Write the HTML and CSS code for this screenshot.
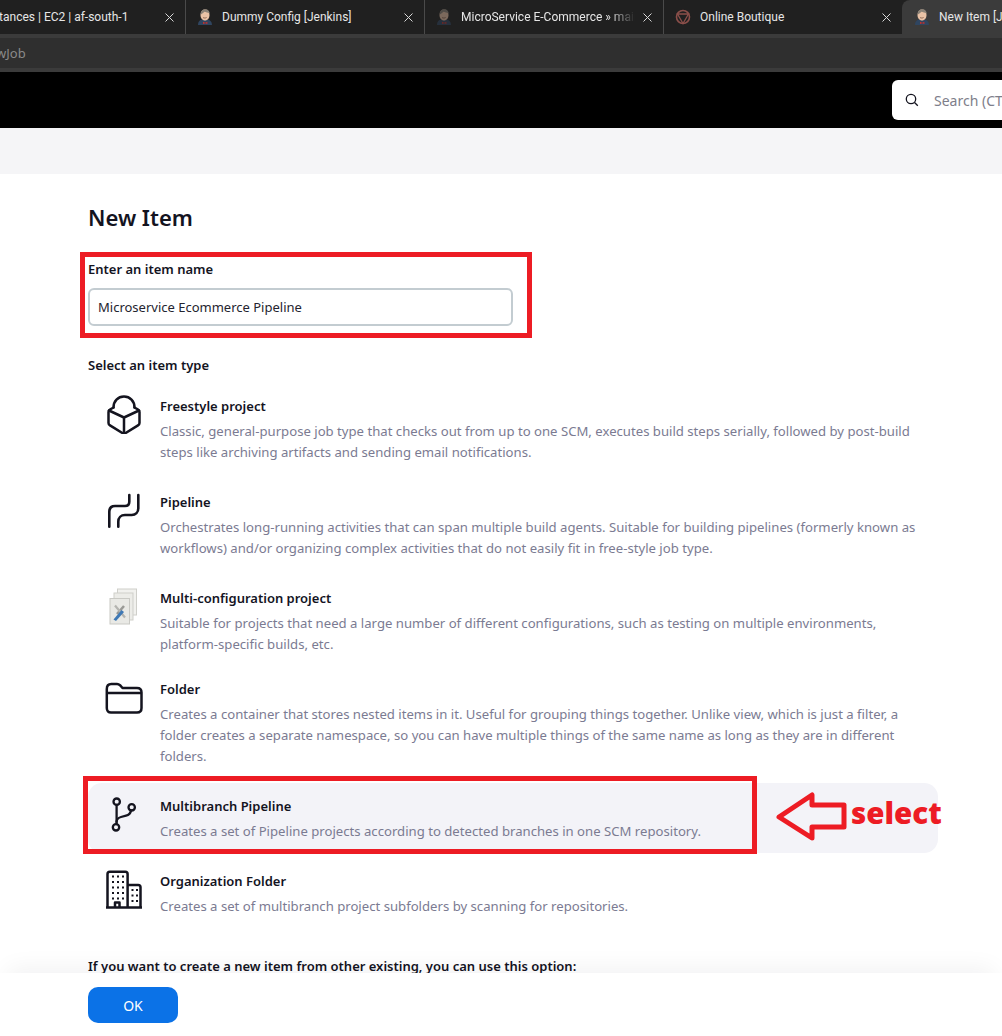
FILE: index.html
```html
<!DOCTYPE html>
<html lang="en">
<head>
<meta charset="utf-8">
<title>New Item [Jenkins]</title>
<link rel="stylesheet" href="styles.css">
</head>
<body>
<svg class="defs" width="0" height="0" aria-hidden="true">
  <symbol id="jenkins" viewBox="0 0 16 16">
    <path d="M1 16c0-3.500 1.500-5 4-5.500h5.500c2.500.5 4.500 2 4.500 5.500z" fill="#2f4560"/>
    <path d="M3.500 6c0-3.500 1.800-5.500 4.500-5.500S12.500 2.500 12.500 6c0 3-1.800 5.500-4.500 5.500S3.500 9 3.500 6z" fill="#e9c2a6"/>
    <path d="M3.700 5.500C3.500 2 6 .1 8.500.2c2.500.1 4 1.800 4.200 4.300C10.800 3.500 8.800 3.200 7.500 2.800 6.500 3.800 5 5 3.700 5.500z" fill="#8b8378"/>
    <path d="M6 12.800l2.200.9 2.200-.9v2.200l-2.200-.8-2.200.8z" fill="#c7302c"/>
    <path d="M6 8.500c1 .7 2.500.7 3.600 0" fill="none" stroke="#77523f" stroke-width=".8"/>
  </symbol>
  <symbol id="boutique" viewBox="0 0 16 16">
    <circle cx="8" cy="8" r="6.500" fill="none" stroke="#8b4f4a" stroke-width="1.600"/>
    <path d="M2.500 5h11L8 14.500z" fill="none" stroke="#8b4f4a" stroke-width="1.300"/>
  </symbol>
  <symbol id="close" viewBox="0 0 9 9">
    <path d="M.5.500l8 8M8.500.500l-8 8" stroke="currentColor" stroke-width="1" fill="none"/>
  </symbol>
</svg>

<div class="tabstrip">
  <div class="tab tab-first">
    <span class="tab-title">Instances | EC2 | af-south-1</span>
    <svg class="tab-close"><use href="#close"/></svg>
  </div>
  <div class="tab">
    <svg class="tab-icon"><use href="#jenkins"/></svg>
    <span class="tab-title">Dummy Config [Jenkins]</span>
    <svg class="tab-close"><use href="#close"/></svg>
  </div>
  <div class="tab">
    <svg class="tab-icon tab-icon-dim"><use href="#jenkins"/></svg>
    <span class="tab-title tab-title-fade">MicroService E-Commerce » main</span>
    <svg class="tab-close"><use href="#close"/></svg>
  </div>
  <div class="tab">
    <svg class="tab-icon"><use href="#boutique"/></svg>
    <span class="tab-title">Online Boutique</span>
    <svg class="tab-close"><use href="#close"/></svg>
  </div>
  <div class="tab tab-active">
    <svg class="tab-icon"><use href="#jenkins"/></svg>
    <span class="tab-title">New Item [Jenkins]</span>
  </div>
</div>
<div class="addressbar"><span class="address-text">view/all/newJob</span></div>

<header class="topbar">
  <div class="search">
    <svg class="search-icon" viewBox="0 0 16 16"><circle cx="7" cy="7" r="4.700" fill="none" stroke="#14141f" stroke-width="1.300"/><path d="M10.500 10.500l3.300 3.300" stroke="#14141f" stroke-width="1.300" fill="none"/></svg>
    <span class="search-text">Search (CTRL+K)</span>
  </div>
</header>
<div class="breadcrumbs"></div>

<main class="content">
  <h1 class="page-title">New Item</h1>
  <label class="field-label">Enter an item name</label>
  <input class="name-input" type="text" value="Microservice Ecommerce Pipeline">
  <h2 class="field-label type-label">Select an item type</h2>

  <ul class="types">
    <li class="type">
      <svg class="type-icon" viewBox="0 0 40 40" fill="none" stroke="#14141f" stroke-width="2.500" stroke-linejoin="round" stroke-linecap="round">
        <path d="M9.500 13.500C9.500 7 14 2.500 20 2.500S30.500 7 30.500 13.500"/>
        <path d="M9.500 13.500L6 15.500c-1 .6-1.500 1.300-1.500 2.500v11c0 1 .5 1.800 1.500 2.400l14 8.600 14-8.600c1-.6 1.500-1.400 1.500-2.400V18c0-1.200-.5-1.900-1.500-2.500l-3.500-2"/>
        <path d="M5 16.500l15 7 15-7M20 23.500V39"/>
      </svg>
      <div class="type-body">
        <div class="type-name">Freestyle project</div>
        <div class="type-desc">Classic, general-purpose job type that checks out from up to one SCM, executes build steps serially, followed by post-build steps like archiving artifacts and sending email notifications.</div>
      </div>
    </li>
    <li class="type">
      <svg class="type-icon" viewBox="0 0 40 40" fill="none" stroke="#14141f" stroke-width="2.600" stroke-linecap="round">
        <path d="M34.300 5v13.300c0 4-2.700 6.700-6.600 6.700H21c-4 0-6.700 2.700-6.700 6.700v5"/>
        <path d="M25.300 5v6.700c0 2.700-1.600 4.300-4.300 4.300H11c-3.500 0-5.700 2.200-5.700 5.700v15"/>
      </svg>
      <div class="type-body">
        <div class="type-name">Pipeline</div>
        <div class="type-desc">Orchestrates long-running activities that can span multiple build agents. Suitable for building pipelines (formerly known as workflows) and/or organizing complex activities that do not easily fit in free-style job type.</div>
      </div>
    </li>
    <li class="type type-tight">
      <svg class="type-icon" viewBox="0 0 40 40">
        <rect x="13.500" y="3" width="19" height="26" fill="#f1f1ee" stroke="#cfcfca"/>
        <rect x="10" y="7" width="19" height="27" fill="#ecece8" stroke="#cfcfca"/>
        <rect x="6" y="12.500" width="19.500" height="25.500" fill="#e9e9e5" stroke="#c9c9c4"/>
        <path d="M20 20l-7 8" stroke="#9a9a96" stroke-width="2.500" fill="none"/>
        <path d="M11 19.500l10 12" stroke="#b4b4b0" stroke-width="2.200" fill="none"/>
        <path d="M9.500 33.500l8-9.500 2.500 2-8 9z" fill="#3f79b5"/>
      </svg>
      <div class="type-body">
        <div class="type-name">Multi-configuration project</div>
        <div class="type-desc">Suitable for projects that need a large number of different configurations, such as testing on multiple environments, platform-specific builds, etc.</div>
      </div>
    </li>
    <li class="type">
      <svg class="type-icon" viewBox="0 0 40 40" fill="none" stroke="#14141f" stroke-width="2.500" stroke-linejoin="round">
        <path d="M2.800 12c0-3.200 1.800-5 4.500-5H13c1.300 0 2 .3 3 1.200L18.500 11H33c2.800 0 4.500 1.700 4.500 4.500V31c0 2.800-1.700 4.500-4.500 4.500H7c-2.700 0-4.200-1.700-4.200-4.500z"/>
        <path d="M2.800 16h34.700"/>
      </svg>
      <div class="type-body">
        <div class="type-name">Folder</div>
        <div class="type-desc">Creates a container that stores nested items in it. Useful for grouping things together. Unlike view, which is just a filter, a folder creates a separate namespace, so you can have multiple things of the same name as long as they are in different folders.</div>
      </div>
    </li>
    <li class="type type-hover">
      <svg class="type-icon" viewBox="0 0 40 40" fill="none" stroke="#14141f" stroke-width="2.300" stroke-linecap="round">
        <circle cx="12.700" cy="7.700" r="3.200"/>
        <circle cx="27.700" cy="13.300" r="3.200"/>
        <circle cx="12" cy="33.300" r="3.200"/>
        <path d="M12.600 11v19"/>
        <path d="M27 16.500c-.5 3-2 4.500-5 5.200l-5 1.300c-2.700.7-4.400 2.300-4.500 5"/>
      </svg>
      <div class="type-body">
        <div class="type-name">Multibranch Pipeline</div>
        <div class="type-desc">Creates a set of Pipeline projects according to detected branches in one SCM repository.</div>
      </div>
    </li>
    <li class="type">
      <svg class="type-icon" viewBox="0 0 40 40" fill="none" stroke="#14141f" stroke-width="2.500" stroke-linejoin="round">
        <path d="M3.500 38.500V5c0-1.500.8-2.300 2.300-2.300h15.500c1.500 0 2.300.8 2.300 2.300v33.500"/>
        <path d="M23.600 16h10.600c1.500 0 2.300.8 2.300 2.300v20.200"/>
        <path d="M2 38.500h36M11 38.500v-5h4.500v5"/>
        <path d="M8 7.500h2M13 7.500h2M18 7.500h2M8 13h2M13 13h2M18 13h2M8 18.500h2M13 18.500h2M18 18.500h2M8 24h2M13 24h2M18 24h2M8 29.500h2M13 29.500h2M18 29.500h2M27.500 21h2M32 21h2M27.500 26.500h2M32 26.500h2M27.500 32h2M32 32h2" stroke-width="2.200"/>
      </svg>
      <div class="type-body">
        <div class="type-name">Organization Folder</div>
        <div class="type-desc">Creates a set of multibranch project subfolders by scanning for repositories.</div>
      </div>
    </li>
  </ul>
  <div class="copy-label">If you want to create a new item from other existing, you can use this option:</div>
</main>

<footer class="bottom-bar">
  <button class="ok-button" type="button">OK</button>
</footer>

<div class="mark mark-name"></div>
<div class="mark mark-type"></div>
<svg class="mark-arrow" viewBox="0 0 72 50" fill="none" stroke="#ed1c24" stroke-width="5" stroke-linejoin="round"><path d="M3 25L36 3v10h32v22H36v11z"/></svg>
<div class="mark-text">select</div>
</body>
</html>
```
FILE: styles.css
```css
* { box-sizing: border-box; }
html, body { margin: 0; padding: 0; height: 1036px; overflow: hidden; }
body { position: relative; background: #fff; font-family: "Noto Sans", "Open Sans", sans-serif; color: #14141f; }
.defs { position: absolute; }

.tabstrip { display: flex; height: 34px; background: #202020; margin-left: -54px; width: 1300px; }
.tab { flex: none; width: 239px; height: 34px; display: flex; align-items: center; padding: 0 11px; border-left: 1px solid #4a4a4a; background-clip: padding-box; position: relative; color: #e6e6e6; font-family: Roboto, sans-serif; font-size: 12px; }
.tab-first { border-left-color: transparent; padding-left: 36px; }
.tab-icon { flex: none; width: 16px; height: 16px; margin-right: 9px; }
.tab-icon-dim { opacity: .45; }
.tab-title { flex: 1; white-space: nowrap; overflow: hidden; min-width: 0; }
.tab-title-fade { -webkit-mask-image: linear-gradient(to right, #000 85%, transparent); mask-image: linear-gradient(to right, #000 85%, transparent); }
.tab-close { flex: none; width: 9px; height: 9px; margin-left: 8px; color: #d8d8d8; }
.tab-active { background: #3b3b3b; border-left: 0; border-radius: 8px 8px 0 0; padding-left: 12px; }

.addressbar { height: 38px; background: #2f2f2f; border-top: 4px solid #3b3b3b; border-bottom: 4px solid #3b3b3b; display: flex; align-items: center; color: #8a8a8a; font-size: 13px; overflow: hidden; }
.address-text { margin-left: -70px; white-space: nowrap; }

.topbar { height: 56px; background: #000; padding: 8px 0 0 892px; display: flex; }
.search { flex: none; width: 400px; height: 40px; background: #fff; border-radius: 6px; display: flex; align-items: center; padding-left: 12px; gap: 14px; }
.search-icon { flex: none; width: 16px; height: 16px; }
.search-text { font-size: 14px; color: #7e7e8a; white-space: nowrap; }
.breadcrumbs { height: 46px; background: #f5f5f7; }

.content { padding: 27px 64px 0 88px; }
.page-title { margin: 0; font-size: 22px; line-height: 32px; font-weight: 600; color: #14141f; }
.field-label { display: block; margin: 26px 0 0; font-size: 13px; line-height: 20px; font-weight: 600; color: #14141f; }
.name-input { display: block; width: 425px; height: 38px; margin-top: 9px; padding: 0 8px; border: 2px solid #c3ccd1; border-radius: 6px; background: #fff; font: 13px "Noto Sans", sans-serif; color: #24242f; outline: 0; }
.type-label { margin-top: 29px; }

.types { list-style: none; margin: 8px 0 0; padding: 0; width: 850px; display: flex; flex-direction: column; gap: 5px; }
.type { display: flex; gap: 16px; padding: 11px 16px 11px; border-radius: 14px; }
.type-tight { margin-bottom: -5px; }
.type-hover { background: #f3f3f8; }
.type-icon { flex: none; width: 40px; height: 40px; }
.type-body { flex: 1; min-width: 0; padding-top: 2px; }
.type-name { font-size: 13px; line-height: 21px; font-weight: 600; color: #14141f; margin-bottom: 4px; }
.type-desc { font-size: 13.15px; line-height: 21px; color: #7b7b92; }
.copy-label { margin-top: 28px; font-size: 13px; line-height: 20px; font-weight: 600; color: #14141f; }

.bottom-bar { position: absolute; left: 0; right: 0; top: 973px; bottom: 0; background: #fff; padding: 14px 0 0 88px; box-shadow: 0 -12px 24px -8px rgba(20, 20, 31, .06); }
.ok-button { display: block; width: 90px; height: 36px; border: 0; border-radius: 10px; background: #0b72e7; color: #fff; font: 400 14px "Noto Sans", sans-serif; }

.mark { position: absolute; border: 5px solid #ed1c24; }
.mark-name { left: 80px; top: 252px; width: 452px; height: 86px; }
.mark-type { left: 83px; top: 776px; width: 674px; height: 78px; }
.mark-arrow { position: absolute; left: 776px; top: 792px; width: 72px; height: 50px; }
.mark-text { position: absolute; left: 851px; top: 794px; font-size: 29.5px; line-height: 38px; font-weight: 900; color: #ed1c24; }
```
